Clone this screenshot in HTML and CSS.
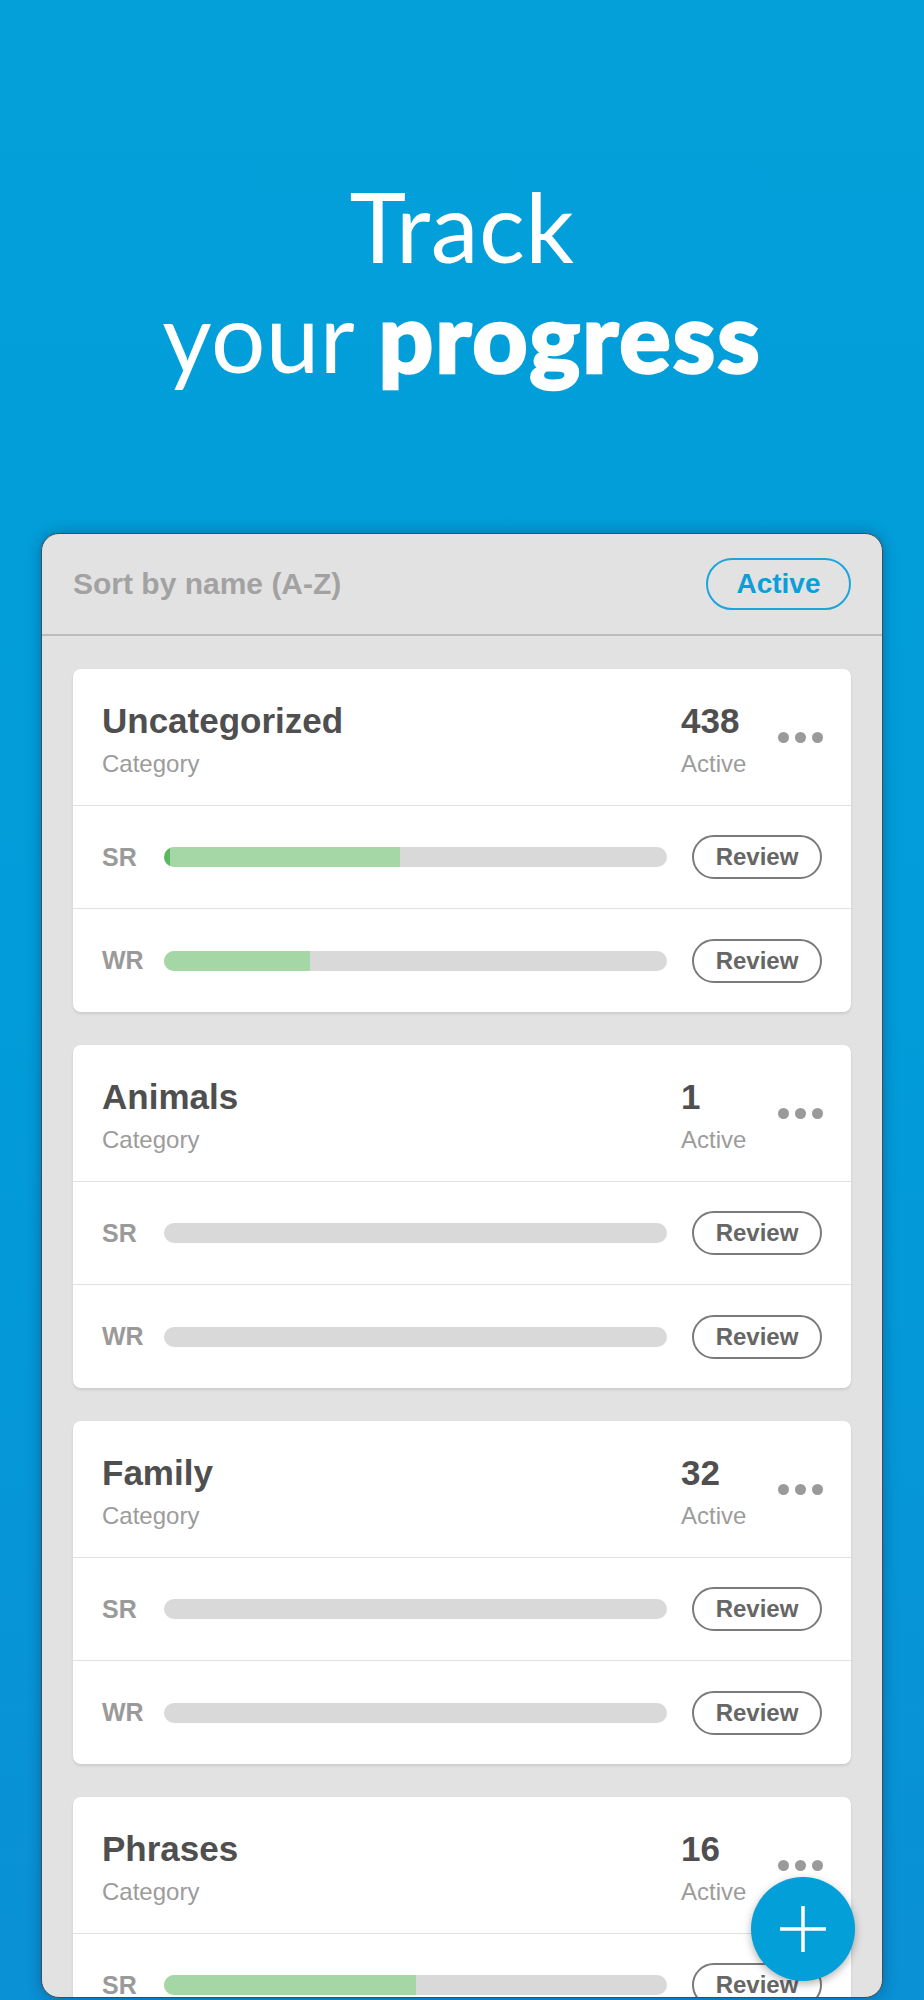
FILE: index.html
```html
<!DOCTYPE html>
<html lang="en">
<head>
<meta charset="utf-8">
<title>Track your progress</title>
<link rel="stylesheet" href="styles.css">
</head>
<body>
<div class="page">
  <header class="hero">
    <h1 class="hero-title"><span class="light">Track</span><br><span class="light">your</span> <strong>progress</strong></h1>
  </header>

  <section class="panel">
    <div class="panel-head">
      <span class="sort">Sort by name (A-Z)</span>
      <button class="pill">Active</button>
    </div>

    <div class="list">
      <article class="card">
        <div class="card-head">
          <div class="name">
            <div class="title">Uncategorized</div>
            <div class="sub">Category</div>
          </div>
          <div class="stat">
            <div class="num">438</div>
            <div class="sub">Active</div>
          </div>
          <div class="dots"><i></i><i></i><i></i></div>
        </div>
        <div class="row">
          <span class="lbl">SR</span>
          <div class="bar"><span class="seg dark" style="width:6px"></span><span class="seg" style="width:230px"></span></div>
          <button class="review">Review</button>
        </div>
        <div class="row">
          <span class="lbl">WR</span>
          <div class="bar"><span class="seg" style="width:29%"></span></div>
          <button class="review">Review</button>
        </div>
      </article>

      <article class="card">
        <div class="card-head">
          <div class="name">
            <div class="title">Animals</div>
            <div class="sub">Category</div>
          </div>
          <div class="stat">
            <div class="num">1</div>
            <div class="sub">Active</div>
          </div>
          <div class="dots"><i></i><i></i><i></i></div>
        </div>
        <div class="row">
          <span class="lbl">SR</span>
          <div class="bar"></div>
          <button class="review">Review</button>
        </div>
        <div class="row">
          <span class="lbl">WR</span>
          <div class="bar"></div>
          <button class="review">Review</button>
        </div>
      </article>

      <article class="card">
        <div class="card-head">
          <div class="name">
            <div class="title">Family</div>
            <div class="sub">Category</div>
          </div>
          <div class="stat">
            <div class="num">32</div>
            <div class="sub">Active</div>
          </div>
          <div class="dots"><i></i><i></i><i></i></div>
        </div>
        <div class="row">
          <span class="lbl">SR</span>
          <div class="bar"></div>
          <button class="review">Review</button>
        </div>
        <div class="row">
          <span class="lbl">WR</span>
          <div class="bar"></div>
          <button class="review">Review</button>
        </div>
      </article>

      <article class="card">
        <div class="card-head">
          <div class="name">
            <div class="title">Phrases</div>
            <div class="sub">Category</div>
          </div>
          <div class="stat">
            <div class="num">16</div>
            <div class="sub">Active</div>
          </div>
          <div class="dots"><i></i><i></i><i></i></div>
        </div>
        <div class="row">
          <span class="lbl">SR</span>
          <div class="bar"><span class="seg" style="width:50%"></span></div>
          <button class="review">Review</button>
        </div>
        <div class="row">
          <span class="lbl">WR</span>
          <div class="bar"></div>
          <button class="review">Review</button>
        </div>
      </article>
    </div>

    <button class="fab" aria-label="Add">
      <svg width="46" height="46" viewBox="0 0 46 46"><path d="M23 0V46M0 23H46" stroke="#fff" stroke-width="3.5" fill="none"/></svg>
    </button>
  </section>
</div>
</body>
</html>
```

FILE: styles.css
```css
* { box-sizing: border-box; }

html, body {
  margin: 0;
  padding: 0;
}

body {
  width: 924px;
  height: 2000px;
  overflow: hidden;
  background: linear-gradient(180deg, #03a0da 0%, #019cd9 50%, #0a90d5 100%);
  font-family: "Liberation Sans", Arial, sans-serif;
}

.page {
  width: 924px;
  height: 2000px;
}

.hero {
  height: 533px;
  padding-top: 171px;
  text-align: center;
}

.hero-title {
  margin: 0;
  font-family: Lato, "Noto Sans", sans-serif;
  font-size: 96px;
  line-height: 110px;
  color: #fff;
  font-weight: 400;
  letter-spacing: 0.5px;
}

.hero-title .light { font-weight: 400; }
.hero-title strong {
  font-weight: 900;
  -webkit-text-stroke: 2.5px #fff;
  letter-spacing: 2px;
}

.panel {
  position: relative;
  margin: 0 41px;
  height: 1465px;
  background: #e2e2e2;
  border: 1px solid #454b52;
  border-radius: 18px;
  overflow: hidden;
  box-shadow: 0 0 14px rgba(0, 30, 70, 0.35);
}

.panel-head {
  height: 102px;
  border-bottom: 2px solid #bcbcbc;
  display: flex;
  align-items: center;
  justify-content: space-between;
  padding: 0 31px;
}

.sort {
  font-size: 30px;
  font-weight: 700;
  color: #a2a2a2;
}

.pill {
  width: 145px;
  height: 52px;
  border: 2px solid #1ea4dd;
  border-radius: 26px;
  background: transparent;
  color: #0a9fda;
  font-family: "Liberation Sans", Arial, sans-serif;
  font-size: 28px;
  font-weight: 700;
  padding: 0;
}

.list {
  padding: 33px 31px 0;
  display: flex;
  flex-direction: column;
  gap: 33px;
}

.card {
  flex: none;
  background: #fff;
  border-radius: 8px;
  box-shadow: 0 2px 3px rgba(0, 0, 0, 0.10);
}

.card-head {
  height: 137px;
  border-bottom: 1px solid #e0e0e0;
  display: flex;
  padding: 32px 28px 0 29px;
}

.name { flex: 1; }

.title, .num {
  font-size: 35px;
  line-height: 40px;
  font-weight: 700;
  color: #4f4f4f;
  margin-bottom: 9px;
}

.sub {
  font-size: 24px;
  line-height: 28px;
  color: #9c9c9c;
}

.stat { width: 97px; }

.dots {
  display: flex;
  gap: 6px;
  margin-top: 31px;
  height: 11px;
}

.dots i {
  width: 11px;
  height: 11px;
  border-radius: 50%;
  background: #9a9a9a;
}

.row {
  height: 103px;
  border-bottom: 1px solid #e0e0e0;
  display: flex;
  align-items: center;
  padding: 0 29px;
}

.row:last-child { border-bottom: none; }

.lbl {
  width: 62px;
  font-size: 25px;
  font-weight: 700;
  color: #9a9a9a;
}

.bar {
  flex: 1;
  height: 20px;
  border-radius: 10px;
  background: #d9d9d9;
  overflow: hidden;
  display: flex;
  margin-right: 25px;
}

.seg {
  height: 100%;
  background: #a4d6a6;
}

.seg.dark { background: #5cb85f; }

.review {
  width: 130px;
  height: 44px;
  border: 2px solid #7a7a7a;
  border-radius: 22px;
  background: #fff;
  color: #666;
  font-family: "Liberation Sans", Arial, sans-serif;
  font-size: 24px;
  font-weight: 700;
  padding: 0;
}

.fab {
  position: absolute;
  left: 709px;
  top: 1343px;
  width: 104px;
  height: 104px;
  border-radius: 50%;
  border: none;
  background: #029fd8;
  box-shadow: 0 3px 8px rgba(0, 0, 0, 0.3);
  display: flex;
  align-items: center;
  justify-content: center;
  padding: 0;
}
```
